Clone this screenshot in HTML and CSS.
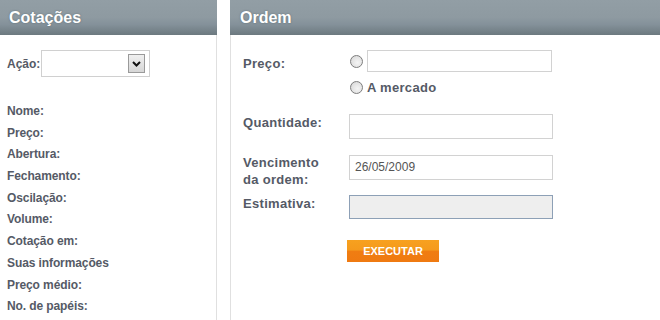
FILE: index.html
```html
<!DOCTYPE html>
<html lang="pt">
<head>
<meta charset="utf-8">
<link rel="stylesheet" href="styles.css">
</head>
<body>
<div class="page">
  <section class="panel panel-left">
    <div class="panel-head">Cotações</div>
    <div class="panel-body left-body">
      <div class="acao-row">
        <span class="acao-label">Ação:</span>
        <div class="select">
          <span class="select-btn">
            <svg width="9" height="6" viewBox="0 0 9 6"><path d="M1 1 L4.5 4.5 L8 1" fill="none" stroke="#111" stroke-width="2"/></svg>
          </span>
        </div>
      </div>
      <ul class="info-list">
        <li>Nome:</li>
        <li>Preço:</li>
        <li>Abertura:</li>
        <li>Fechamento:</li>
        <li>Oscilação:</li>
        <li>Volume:</li>
        <li>Cotação em:</li>
        <li>Suas informações</li>
        <li>Preço médio:</li>
        <li>No. de papéis:</li>
      </ul>
    </div>
  </section>
  <section class="panel panel-right">
    <div class="panel-head">Ordem</div>
    <div class="panel-body right-body">
      <div class="row row-preco">
        <div class="label lbl-preco">Preço:</div>
        <div class="controls">
          <div class="radio-line first">
            <span class="radio"></span>
            <span class="field field-preco"></span>
          </div>
          <div class="radio-line second">
            <span class="radio"></span>
            <span class="radio-text">A mercado</span>
          </div>
        </div>
      </div>
      <div class="row row-qtd">
        <div class="label lbl-qtd">Quantidade:</div>
        <span class="field field-wide"></span>
      </div>
      <div class="row row-venc">
        <div class="label lbl-venc">Vencimento<br>da ordem:</div>
        <span class="field field-wide field-date">26/05/2009</span>
      </div>
      <div class="row row-est">
        <div class="label lbl-est">Estimativa:</div>
        <span class="field field-wide field-disabled"></span>
      </div>
      <div class="row row-btn">
        <button class="btn">EXECUTAR</button>
      </div>
    </div>
  </section>
</div>
</body>
</html>
```
FILE: styles.css
```css
html, body {
  margin: 0;
  padding: 0;
  background: #fff;
}
body {
  font-family: "Liberation Sans", Arial, sans-serif;
  color: #555a66;
}
.page {
  display: flex;
  width: 660px;
  height: 320px;
  overflow: hidden;
}
.panel {
  display: flex;
  flex-direction: column;
  height: 320px;
}
.panel-left {
  width: 217px;
}
.panel-right {
  margin-left: 13px;
  flex: 1;
}
.panel-head {
  height: 35px;
  box-sizing: border-box;
  padding-top: 8px;
  background: linear-gradient(#929ea5 0%, #8e9aa1 50%, #84919a 70%, #6c797f 100%);
  color: #fff;
  font-weight: bold;
  font-size: 16px;
  line-height: 19px;
  text-shadow: 0 0 2px rgba(60, 80, 90, 0.6);
}
.panel-left .panel-head { padding-left: 9px; }
.panel-right .panel-head { padding-left: 10px; }
.panel-body {
  flex: 1;
}
.left-body {
  border-right: 1px solid #e0e0e0;
}
.right-body {
  border-left: 1px solid #e0e0e0;
  padding-left: 12px;
  padding-top: 15px;
}

/* left */
.acao-row {
  display: flex;
  align-items: center;
  margin-top: 15px;
  padding-left: 7px;
  height: 27px;
}
.acao-label {
  font-size: 12px;
  font-weight: bold;
  width: 34px;
}
.select {
  box-sizing: border-box;
  width: 109px;
  height: 27px;
  border: 1px solid #d0d0d0;
  display: flex;
  justify-content: flex-end;
  align-items: center;
  padding-right: 4px;
}
.select-btn {
  box-sizing: border-box;
  width: 17px;
  height: 19px;
  border: 1px solid #9a9a9a;
  background: linear-gradient(#f0f0f0, #d6d6d6);
  display: flex;
  align-items: center;
  justify-content: center;
}
.info-list {
  list-style: none;
  margin: 24px 0 0;
  padding: 0 0 0 7px;
}
.info-list li {
  font-size: 12px;
  font-weight: bold;
  line-height: 21.7px;
  height: 21.7px;
  letter-spacing: -0.1px;
}

/* right */
.row {
  display: flex;
  align-items: flex-start;
}
.label {
  width: 106px;
  flex: none;
  font-size: 13px;
  font-weight: bold;
  letter-spacing: 0.3px;
  line-height: 17px;
}
.lbl-preco { padding-top: 5px; }
.lbl-qtd { margin-top: 0; }
.lbl-venc { margin-top: -1px; }
.lbl-est { padding-top: 0; }
.row-qtd { margin-top: 20px; }
.row-venc { margin-top: 16px; }
.row-est { margin-top: 7px; }
.row-btn { margin-top: 21px; padding-left: 104px; }

.controls {
  display: flex;
  flex-direction: column;
}
.radio-line {
  display: flex;
  align-items: center;
}
.radio-line.first { height: 22px; }
.radio-line.second { height: 14px; margin-top: 8px; }
.radio {
  box-sizing: border-box;
  width: 13px;
  height: 13px;
  border-radius: 50%;
  border: 1px solid #7d7d7d;
  background: radial-gradient(circle at 60% 60%, #f4f4f4 0%, #e2e2e2 60%, #cfcfcf 100%);
  margin-left: 1px;
  margin-right: 4px;
  flex: none;
}
.radio-text {
  font-size: 13px;
  font-weight: bold;
  letter-spacing: 0.3px;
}
.field {
  display: block;
  box-sizing: border-box;
  border: 1px solid #d2d2d2;
  background: #fff;
}
.field-preco {
  width: 185px;
  height: 22px;
}
.field-wide {
  width: 204px;
  height: 25px;
}
.field-date {
  font-size: 12px;
  color: #555;
  padding-left: 5px;
  line-height: 23px;
}
.field-disabled {
  height: 24px;
  background: #eeeeee;
  border-color: #8da0b6;
}
.btn {
  width: 92px;
  height: 22px;
  border: none;
  padding: 0;
  background: linear-gradient(#f7a11f 0%, #f59a1c 45%, #f07d12 52%, #ef7a11 100%);
  color: #fff;
  font-family: "Liberation Sans", Arial, sans-serif;
  font-size: 11px;
  font-weight: bold;
  letter-spacing: 0;
}
```
